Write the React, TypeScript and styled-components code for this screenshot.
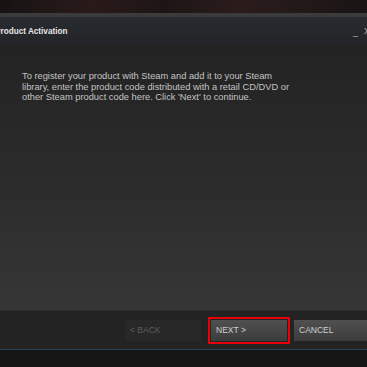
import { createGlobalStyle, styled } from 'styled-components';

const GlobalStyle = createGlobalStyle`
  html, body {
    margin: 0;
    padding: 0;
    background: #141414;
  }
  #root {
    width: 367px;
    height: 367px;
    overflow: hidden;
  }
`;

// 스팀 제품 활성화 창
const App = () => {
  return (
    <>
      <GlobalStyle />
      <Screen>
        <Backdrop />
        <Dialog>
          <TitleBar>
            <Title>Product Activation</Title>
            <WindowControls>
              <Minimize>_</Minimize>
              <Close>X</Close>
            </WindowControls>
          </TitleBar>
          <Body>
            <Description>
              To register your product with Steam and add it to your Steam library, enter the
              product code distributed with a retail CD/DVD or other Steam product code here.
              Click 'Next' to continue.
            </Description>
          </Body>
          <Footer>
            <Button $disabled>&lt; BACK</Button>
            <Highlight>
              <Button>NEXT &gt;</Button>
            </Highlight>
            <Button>CANCEL</Button>
          </Footer>
        </Dialog>
        <Bottom />
      </Screen>
    </>
  );
};

const Screen = styled.div`
  display: flex;
  flex-direction: column;
  width: 367px;
  height: 367px;
  font-family: 'Liberation Sans', Arial, sans-serif;
`;

const Backdrop = styled.div`
  height: 13px;
  background: linear-gradient(100deg, #171313 0%, #2a1a1a 25%, #1d1515 45%, #2b1c1c 65%, #1a1414 100%);
`;

const Dialog = styled.div`
  display: flex;
  flex-direction: column;
  flex: 1;
  border-top: 4px solid #3b3b3b;
  border-bottom: 1px solid #2a4458;
`;

const TitleBar = styled.div`
  display: flex;
  justify-content: space-between;
  align-items: center;
  height: 26px;
  padding-top: 1px;
  background: linear-gradient(180deg, #272b31 0%, #232427 100%);
`;

const Title = styled.span`
  margin-left: -5px;
  color: #e6e6e6;
  font-size: 8.2px;
  font-weight: bold;
`;

const WindowControls = styled.div`
  display: flex;
  gap: 6px;
  margin-right: -3px;
  color: #b8b8b8;
  font-size: 9px;
`;

const Minimize = styled.span`
  position: relative;
  top: 1px;
`;

const Close = styled.span``;

const Body = styled.div`
  flex: 1;
  padding: 27px 0 0 22px;
  background: linear-gradient(180deg, #232323 0%, #2b2b2b 50%, #363636 100%);
`;

const Description = styled.p`
  width: 274px;
  margin: 0;
  color: #c4c4c4;
  font-size: 9.3px;
  line-height: 10.7px;
`;

const Footer = styled.div`
  display: flex;
  align-items: center;
  gap: 5px;
  height: 38px;
  padding-left: 125px;
  background: #232323;
  border-top: 1px solid #2a2a2a;
`;

const Highlight = styled.div`
  display: flex;
  padding: 1px;
  border: 2px solid #e8000b;
  margin: 0 -1px 0 2px;
`;

const Button = styled.div<{ $disabled?: boolean }>`
  display: flex;
  align-items: center;
  width: 76px;
  height: 21px;
  padding-left: 5px;
  box-sizing: border-box;
  flex-shrink: 0;
  font-size: 8.5px;
  color: ${({ $disabled }) => ($disabled ? '#5c5c5c' : '#cfcfcf')};
  background: ${({ $disabled }) =>
    $disabled ? '#282828' : 'linear-gradient(180deg, #505050 0%, #3c3c3c 100%)'};
`;

const Bottom = styled.div`
  height: 17px;
  background: #151515;
`;

export default App;
